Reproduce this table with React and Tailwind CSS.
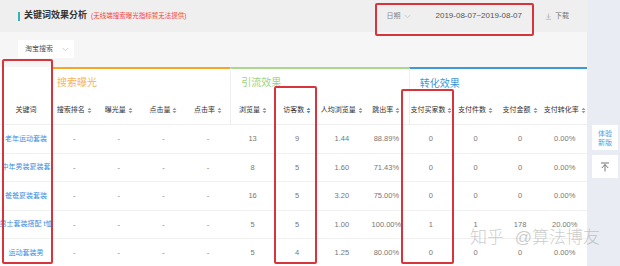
import { useState } from "react";

const cols = ["搜索排名", "曝光量", "点击量", "点击率", "浏览量", "访客数", "人均浏览量", "跳出率", "支付买家数", "支付件数", "支付金额", "支付转化率"];

const rows = [
  ["老年运动套装", "-", "-", "-", "-", "13", "9", "1.44", "88.89%", "0", "0", "0", "0.00%"],
  ["中年男装夏装套", "-", "-", "-", "-", "8", "5", "1.60", "71.43%", "0", "0", "0", "0.00%"],
  ["爸爸夏装套装", "-", "-", "-", "-", "16", "5", "3.20", "75.00%", "0", "0", "0", "0.00%"],
  ["男士套装搭配 t恤", "-", "-", "-", "-", "5", "5", "1.00", "100.00%", "1", "1", "178", "20.00%"],
  ["运动套装男", "-", "-", "-", "-", "5", "4", "1.25", "80.00%", "0", "0", "0", "0.00%"],
];

function SortIcon({ active }) {
  const c = active ? "#3a8fd6" : "#9a9a9a";
  return (
    <svg width="5" height="7" viewBox="0 0 5 7" className="ml-[2px] shrink-0">
      <path d="M0.5 3 L2.5 0.8 L4.5 3 Z" fill={c} />
      <path d="M0.5 4 L2.5 6.2 L4.5 4 Z" fill={c} />
    </svg>
  );
}

function Chevron() {
  return (
    <svg width="7" height="5" viewBox="0 0 7 5" className="shrink-0">
      <path d="M0.8 1 L3.5 3.8 L6.2 1" fill="none" stroke="#c4c4c4" strokeWidth="0.8" />
    </svg>
  );
}

export default function App() {
  const [sortCol] = useState(5);

  return (
    <div className="relative w-[620px] h-[266px] overflow-hidden flex bg-[#e9edf3] font-['Liberation_Sans','Noto_Sans_CJK_SC',sans-serif]">
      <div className="w-[587px] flex flex-col bg-white">
        {/* header */}
        <div className="h-[32px] shrink-0 bg-[#efefef] flex items-center">
          <div className="ml-[18px] w-[2px] h-[9px] bg-[#33b3b3]" />
          <span className="ml-[4px] text-[9px] font-bold text-[#333]">关键词效果分析</span>
          <span className="ml-[4px] text-[6.5px] text-[#f2463a]">(无线端搜索曝光指标暂无法提供)</span>
          <div className="ml-auto flex items-center">
            <span className="text-[7px] text-[#888]">日期</span>
            <span className="ml-[4px]"><Chevron /></span>
            <span className="ml-[24px] text-[8px] text-[#555]">2019-08-07~2019-08-07</span>
            <svg width="7" height="7" viewBox="0 0 7 7" className="ml-[23px]">
              <path d="M3.5 0.5 V4.8 M1.6 3 L3.5 4.9 L5.4 3 M0.8 6.3 H6.2" fill="none" stroke="#b0b0b0" strokeWidth="0.7" />
            </svg>
            <span className="ml-[3px] mr-[18px] text-[7px] text-[#777]">下载</span>
          </div>
        </div>

        {/* toolbar */}
        <div className="h-[35px] shrink-0 bg-[#f6f6f6] pt-[8px] pl-[18px]">
          <div className="w-[56px] h-[18px] bg-white flex items-center pl-[7px] pr-[5px]">
            <span className="text-[7px] text-[#555]">淘宝搜索</span>
            <span className="ml-auto"><Chevron /></span>
          </div>
        </div>

        {/* table */}
        <div className="grid grid-cols-[52px_repeat(12,1fr)] text-[#666]">
          <div className="h-[29px]" />
          <div className="col-span-4 h-[29px] border-t-2 border-[#f5a623] pl-[5px] flex items-center">
            <span className="text-[10px] text-[#f4b45a]">搜索曝光</span>
          </div>
          <div className="col-span-4 h-[29px] border-t-2 border-l border-l-[#eeeeee] border-t-[#a9d88c] pl-[10px] flex items-center">
            <span className="text-[10px] text-[#9fd37e]">引流效果</span>
          </div>
          <div className="col-span-4 h-[29px] border-t-2 border-l border-l-[#eeeeee] border-t-[#3d9ad6] pl-[10px] pt-[2px] flex items-center">
            <span className="text-[10px] text-[#3d97d4]">转化效果</span>
          </div>

          <div className="h-[29px] border-b border-[#eeeeee] flex items-center justify-center text-[7px] text-[#333]">关键词</div>
          {cols.map((c, i) => (
            <div
              key={c}
              className={
                "h-[29px] border-b border-[#eeeeee] flex items-center justify-center text-[7px] text-[#333] whitespace-nowrap" +
                (i === 4 || i === 8 ? " border-l" : "")
              }
            >
              {c}
              <SortIcon active={i === sortCol} />
            </div>
          ))}

          {rows.map((r) =>
            r.map((v, j) => (
              <div
                key={r[0] + j}
                className={
                  j === 0
                    ? "h-[28.5px] border-b border-[#f0f0f0] flex items-center justify-center whitespace-nowrap text-[7px] text-[#3a8ee0]"
                    : "h-[28.5px] border-b border-[#f0f0f0] flex items-center justify-center whitespace-nowrap text-[7.5px] text-[#777]"
                }
              >
                {v}
              </div>
            ))
          )}
        </div>
      </div>

      {/* side tools */}
      <div className="flex-1 flex flex-col pt-[125px] pl-[5px] gap-[5px]">
        <div className="w-[26px] h-[25px] bg-white flex flex-col items-center justify-center text-[7px] leading-[9px] text-[#4a9be0]">
          <span>体验</span>
          <span>新版</span>
        </div>
        <div className="w-[26px] h-[23px] bg-white flex items-center justify-center">
          <svg width="10" height="10" viewBox="0 0 10 10">
            <path d="M1 1 H9 M5 2.5 V9.5 M5 2.5 L1.8 6 M5 2.5 L8.2 6" fill="none" stroke="#555" strokeWidth="0.8" />
          </svg>
        </div>
      </div>

      {/* annotations */}
      <div className="absolute left-[375px] top-[3px] w-[159px] h-[33px] border-2 border-[#d8343c] rounded-[2px]" />
      <div className="absolute left-[2px] top-[59px] w-[51px] h-[205px] border-2 border-[#d8343c] rounded-[2px]" />
      <div className="absolute left-[274px] top-[86px] w-[43px] h-[178px] border-2 border-[#d8343c] rounded-[2px]" />
      <div className="absolute left-[401px] top-[89px] w-[53px] h-[175px] border-2 border-[#d8343c] rounded-[2px]" />

      {/* watermark */}
      <div className="absolute left-[470px] top-[229px] text-[17px] leading-none font-light text-[#a8a8a8]/60 whitespace-nowrap">
        知乎 <span className="ml-[6px]">@算法博友</span>
      </div>
    </div>
  );
}
